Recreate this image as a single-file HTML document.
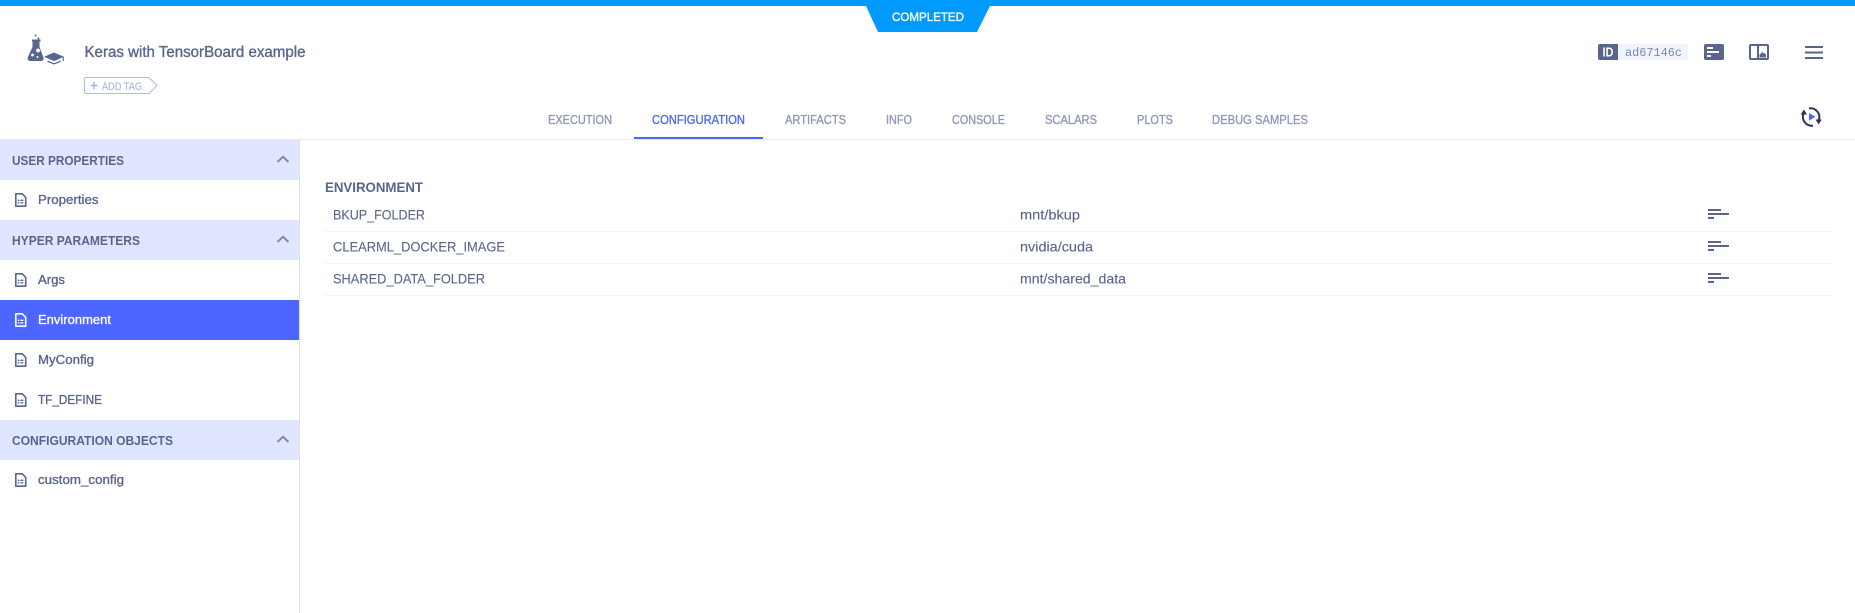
<!DOCTYPE html>
<html lang="en">
<head>
<meta charset="utf-8">
<title>Keras with TensorBoard example</title>
<style>
html,body{margin:0;padding:0;background:#fff;width:1855px;height:613px;overflow:hidden}
svg{display:block}
text{font-family:"Liberation Sans",sans-serif;fill:#5a658e}
.m{stroke:#5a658e;stroke-width:.35}
.tab{font-size:12.5px;fill:#8f98b8;stroke:#8f98b8;stroke-width:.35}
.h{font-size:12.5px;font-weight:700}
.i{font-size:13px;stroke:#5a658e;stroke-width:.35}
.r{font-size:14px;stroke:#5a658e;stroke-width:.12}
</style>
</head>
<body>
<svg width="1855" height="613" viewBox="0 0 1855 613" xmlns="http://www.w3.org/2000/svg">
<defs>
<g id="doc"><path d="M.8 .8h6.400l3.500 3.500V13.200H.8z" fill="none" stroke-width="1.600" stroke-linejoin="round"/><path d="M2.800 7.300h1.600M5.400 7.300h3M2.800 9.900h1.600M5.400 9.900h3" fill="none" stroke-width="1.300"/></g>
<g id="bars" fill="#5a658e"><rect x="0" y="0" width="13" height="2"/><rect x="0" y="4" width="21" height="2"/><rect x="0" y="8" width="6" height="2"/></g>
<path id="chev" d="M0 6L5.500 .8L11 6" fill="none" stroke="#7f8ab5" stroke-width="2"/>
</defs>

<!-- top bar -->
<rect x="0" y="0" width="1855" height="6" fill="#009aff"/>
<polygon points="866,6 990,6 977,32 878,32" fill="#009aff"/>
<text x="892" y="21" font-size="12" textLength="72" lengthAdjust="spacingAndGlyphs" style="fill:#fff;stroke:#fff;stroke-width:.35">COMPLETED</text>

<!-- experiment icon -->
<g fill="#5a658e">
<circle cx="35.500" cy="35.500" r="1"/><circle cx="38.500" cy="38.500" r="1"/>
<path fill-rule="evenodd" d="M32 39.500h8.500v2h-1v5.500l4 10.500q.6 3.200-2.200 3.500H30q-3-.3-2.300-3.500l4.800-10.500v-5.500H32zM38 48.500a2 2 0 1 0 .01 0zM32.500 53.500a1.500 1.500 0 1 0 .01 0zM37.500 56a1 1 0 1 0 .01 0z"/>
<path d="M54 52.500l10 4.300-10 4.300-10-4.300z"/>
<path d="M47.500 60.500l6.500 2.800 6.500-2.800v1.500l-6.500 2.500-6.500-2.500z"/>
<rect x="62.800" y="57" width="1.100" height="4"/>
</g>

<!-- title -->
<text x="84.500" y="57" font-size="15.500" class="m" textLength="221" lengthAdjust="spacingAndGlyphs">Keras with TensorBoard example</text>

<!-- add tag -->
<path d="M86 77.500H149L157 85.500L149 93.500H86Q84.500 93.500 84.500 92V79Q84.500 77.500 86 77.500Z" fill="none" stroke="#b0bae3" stroke-width="1"/>
<path d="M94 82v7M90.500 85.500h7" stroke="#a9b4dd" stroke-width="1.500" fill="none"/>
<text x="102" y="90" font-size="11" textLength="40" lengthAdjust="spacingAndGlyphs" style="fill:#b0bae3;stroke:#b0bae3;stroke-width:.2">ADD TAG</text>

<!-- right header actions -->
<path d="M1600 44h18v16h-18q-2 0-2-2V46q0-2 2-2z" fill="#5a658e"/>
<text x="1602.500" y="56.500" font-size="12.500" font-weight="700" textLength="11" lengthAdjust="spacingAndGlyphs" style="fill:#fff">ID</text>
<path d="M1618 44h68q2 0 2 2v12q0 2-2 2h-68z" fill="#f0f4fd"/>
<text x="1625" y="56" font-size="12" textLength="57" lengthAdjust="spacingAndGlyphs" style="font-family:'Liberation Mono',monospace;fill:#7e88ae">ad67146c</text>

<rect x="1704" y="44" width="20" height="16" rx="2" fill="#5a658e"/>
<rect x="1707" y="47" width="6" height="2" fill="#fff"/>
<rect x="1707" y="51" width="12" height="2" fill="#fff"/>
<rect x="1707" y="55" width="4" height="2" fill="#fff"/>

<rect x="1750" y="45" width="18" height="14" rx="1" fill="none" stroke="#5a658e" stroke-width="2"/>
<rect x="1757" y="45" width="2" height="14" fill="#5a658e"/>
<path d="M1759.500 57.500v-3l1.500-1 1-2 1.300 2 1.200-.5 1.500 1.500v3z" fill="#5a658e"/>

<rect x="1805" y="46" width="18" height="2" fill="#5a658e"/>
<rect x="1805" y="51.500" width="18" height="2" fill="#5a658e"/>
<rect x="1805" y="57" width="18" height="2" fill="#5a658e"/>

<!-- tabs -->
<text x="548" y="124" class="tab" textLength="64" lengthAdjust="spacingAndGlyphs">EXECUTION</text>
<text x="652" y="124" class="tab" textLength="93" lengthAdjust="spacingAndGlyphs" style="fill:#4d66ff;stroke:#4d66ff">CONFIGURATION</text>
<text x="785" y="124" class="tab" textLength="61" lengthAdjust="spacingAndGlyphs">ARTIFACTS</text>
<text x="886" y="124" class="tab" textLength="26" lengthAdjust="spacingAndGlyphs">INFO</text>
<text x="952" y="124" class="tab" textLength="53" lengthAdjust="spacingAndGlyphs">CONSOLE</text>
<text x="1045" y="124" class="tab" textLength="52" lengthAdjust="spacingAndGlyphs">SCALARS</text>
<text x="1137" y="124" class="tab" textLength="36" lengthAdjust="spacingAndGlyphs">PLOTS</text>
<text x="1212" y="124" class="tab" textLength="96" lengthAdjust="spacingAndGlyphs">DEBUG SAMPLES</text>
<rect x="0" y="139" width="1855" height="1" fill="#ececf1"/>
<rect x="634" y="137" width="129" height="2" fill="#4d66ff"/>

<!-- refresh icon -->
<path d="M1803.600 113.500A8.800 8.800 0 0 0 1813 125.600" fill="none" stroke="#2c3555" stroke-width="2"/>
<path d="M1809 108.400A8.800 8.800 0 0 1 1818.800 120" fill="none" stroke="#2c3555" stroke-width="2"/>
<path d="M1800.700 114.500h6.300l-3.100-5zM1815.500 119.500h6.300l-3.100 5z" fill="#2c3555"/>
<path d="M1809 113l6.500 3.800-6.500 3.800z" fill="#4d66ff"/>

<!-- sidebar -->
<rect x="299" y="140" width="1" height="473" fill="#dde0f0"/>
<rect x="0" y="140" width="299" height="40" fill="#e0e6ff"/>
<rect x="0" y="220" width="299" height="40" fill="#e0e6ff"/>
<rect x="0" y="300" width="299" height="40" fill="#4d66ff"/>
<rect x="0" y="420" width="299" height="40" fill="#e0e6ff"/>

<text x="12" y="165" class="h" textLength="112" lengthAdjust="spacingAndGlyphs">USER PROPERTIES</text>
<text x="12" y="245" class="h" textLength="128" lengthAdjust="spacingAndGlyphs">HYPER PARAMETERS</text>
<text x="12" y="445" class="h" textLength="161" lengthAdjust="spacingAndGlyphs">CONFIGURATION OBJECTS</text>
<use href="#chev" x="277.500" y="156"/>
<use href="#chev" x="277.500" y="236"/>
<use href="#chev" x="277.500" y="436"/>

<use href="#doc" x="15" y="193" stroke="#5a658e"/>
<use href="#doc" x="15" y="273" stroke="#5a658e"/>
<use href="#doc" x="15" y="313" stroke="#ffffff"/>
<use href="#doc" x="15" y="353" stroke="#5a658e"/>
<use href="#doc" x="15" y="393" stroke="#5a658e"/>
<use href="#doc" x="15" y="473" stroke="#5a658e"/>

<text x="38" y="204" class="i" textLength="60.500" lengthAdjust="spacingAndGlyphs">Properties</text>
<text x="38" y="284" class="i" textLength="27" lengthAdjust="spacingAndGlyphs">Args</text>
<text x="38" y="324" class="i" textLength="73" lengthAdjust="spacingAndGlyphs" style="fill:#fff;stroke:#fff">Environment</text>
<text x="38" y="364" class="i" textLength="56" lengthAdjust="spacingAndGlyphs">MyConfig</text>
<text x="38" y="404" class="i" textLength="64" lengthAdjust="spacingAndGlyphs">TF_DEFINE</text>
<text x="38" y="484" class="i" textLength="86" lengthAdjust="spacingAndGlyphs">custom_config</text>

<!-- content -->
<text x="325" y="192" font-size="14" textLength="98" lengthAdjust="spacingAndGlyphs" style="font-weight:700">ENVIRONMENT</text>

<text x="333" y="219.500" class="r" textLength="92" lengthAdjust="spacingAndGlyphs">BKUP_FOLDER</text>
<text x="1020" y="219.500" class="r" textLength="60" lengthAdjust="spacingAndGlyphs">mnt/bkup</text>
<use href="#bars" x="1708" y="209"/>
<rect x="325" y="231" width="1506" height="1" fill="#f0f3fb"/>

<text x="333" y="251.500" class="r" textLength="172" lengthAdjust="spacingAndGlyphs">CLEARML_DOCKER_IMAGE</text>
<text x="1020" y="251.500" class="r" textLength="73" lengthAdjust="spacingAndGlyphs">nvidia/cuda</text>
<use href="#bars" x="1708" y="241"/>
<rect x="325" y="263" width="1506" height="1" fill="#f0f3fb"/>

<text x="333" y="283.500" class="r" textLength="152" lengthAdjust="spacingAndGlyphs">SHARED_DATA_FOLDER</text>
<text x="1020" y="283.500" class="r" textLength="106" lengthAdjust="spacingAndGlyphs">mnt/shared_data</text>
<use href="#bars" x="1708" y="273"/>
<rect x="325" y="295" width="1506" height="1" fill="#f0f3fb"/>
</svg>
</body>
</html>
